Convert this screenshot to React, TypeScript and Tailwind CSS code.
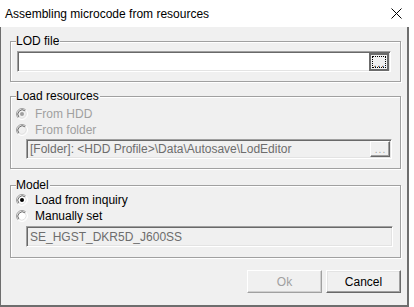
import React from "react";

function Radio({ checked, disabled }: { checked?: boolean; disabled?: boolean }) {
  const a = 3.89;
  return (
    <svg width="12" height="12" viewBox="0 0 12 12" className="shrink-0">
      <circle cx="6" cy="6" r="5" fill={disabled ? "#f0f0f0" : "#ffffff"} />
      <path d={`M${6 - a} ${6 + a} A5.5 5.5 0 0 1 ${6 + a} ${6 - a}`} fill="none" stroke="#a0a0a0" strokeWidth="1" />
      <path d={`M${6 + a} ${6 - a} A5.5 5.5 0 0 1 ${6 - a} ${6 + a}`} fill="none" stroke="#ffffff" strokeWidth="1" />
      <path d={`M${6 - 3.1} ${6 + 3.1} A4.4 4.4 0 0 1 ${6 + 3.1} ${6 - 3.1}`} fill="none" stroke="#696969" strokeWidth="1" />
      <path d={`M${6 + 3.1} ${6 - 3.1} A4.4 4.4 0 0 1 ${6 - 3.1} ${6 + 3.1}`} fill="none" stroke="#e3e3e3" strokeWidth="1" />
      {checked && <circle cx="6" cy="6" r="2" fill={disabled ? "#a0a0a0" : "#000000"} />}
    </svg>
  );
}

function Group({ label, className, children }: { label: string; className: string; children?: React.ReactNode }) {
  return (
    <div className={`relative w-[391px] border border-[#a0a0a0] shadow-[inset_1px_1px_0_#ffffff,1px_1px_0_#ffffff] ${className}`}>
      <span className="absolute left-[5px] top-[-9px] bg-[#f0f0f0] pr-[1px] leading-[16px] text-black">{label}</span>
      {children}
    </div>
  );
}

export default function App() {
  return (
    <div
      className="w-[414px] h-[307px] bg-white overflow-hidden text-[12px] text-black"
      style={{ fontFamily: '"Liberation Sans", Arial, sans-serif' }}
    >
      <div className="w-[409px] h-[27px] flex items-center justify-between pl-[5px] pr-[6px] bg-white">
        <span className="leading-none">Assembling microcode from resources</span>
        <svg width="11" height="11" viewBox="0 0 11 11" className="mr-[1px]">
          <path d="M0.5 0.5 L10.5 10.5 M10.5 0.5 L0.5 10.5" stroke="#000" strokeWidth="1" />
        </svg>
      </div>
      <div className="w-[409px] h-[280px] bg-[#f0f0f0] border-l border-r-2 border-b-2 border-[#6e6e6e] pl-[9px] pt-[14px]">
        <Group label="LOD file" className="h-[41px] pl-[6px] pt-[9px]">
          <div className="w-[374px] h-[21px] flex items-center justify-end bg-white border border-t-[#a0a0a0] border-l-[#a0a0a0] border-r-white border-b-white shadow-[inset_1px_1px_0_#696969,inset_-1px_-1px_0_#e3e3e3] pr-[1px]">
            <div className="w-[20px] h-[18px] border-2 border-[#6b6b6b] bg-[#f0f0f0] p-[1px]">
              <div className="w-full h-full border border-dotted border-black flex items-end justify-center">
                <span className="text-[10px] leading-[6px] tracking-[1px] pl-[1px]">...</span>
              </div>
            </div>
          </div>
        </Group>

        <Group label="Load resources" className="mt-[14px] h-[73px] pl-[5px] pt-[9px]">
          <div className="flex items-center gap-[7px] h-[16px] text-[#a0a0a0]">
            <Radio checked disabled />
            <span>From HDD</span>
          </div>
          <div className="flex items-center gap-[7px] h-[16px] text-[#a0a0a0]">
            <Radio disabled />
            <span>From folder</span>
          </div>
          <div className="ml-[10px] mt-[1px] w-[366px] h-[20px] flex items-center justify-between bg-[#f0f0f0] border border-t-[#a0a0a0] border-l-[#a0a0a0] border-r-white border-b-white shadow-[inset_1px_1px_0_#696969,inset_-1px_-1px_0_#e3e3e3] pl-[3px] pr-[1px]">
            <span className="text-[#6d6d6d] whitespace-nowrap">[Folder]: &lt;HDD Profile&gt;\Data\Autosave\LodEditor</span>
            <div className="w-[20px] h-[16px] bg-[#f0f0f0] border border-t-white border-l-white border-r-[#696969] border-b-[#696969] shadow-[inset_-1px_-1px_0_#a0a0a0] flex items-end justify-center pb-[3px]">
              <span className="text-[10px] leading-[6px] text-[#a0a0a0] tracking-[1px] pl-[1px]">...</span>
            </div>
          </div>
        </Group>

        <Group label="Model" className="mt-[16px] h-[73px] pl-[5px] pt-[6px]">
          <div className="flex items-center gap-[7px] h-[16px]">
            <Radio checked />
            <span>Load from inquiry</span>
          </div>
          <div className="flex items-center gap-[7px] h-[16px]">
            <Radio />
            <span>Manually set</span>
          </div>
          <div className="ml-[10px] mt-[2px] w-[367px] h-[21px] flex items-center bg-[#f0f0f0] border border-t-[#a0a0a0] border-l-[#a0a0a0] border-r-white border-b-white shadow-[inset_1px_1px_0_#696969,inset_-1px_-1px_0_#e3e3e3] pl-[3px]">
            <span className="text-[#6d6d6d]">SE_HGST_DKR5D_J600SS</span>
          </div>
        </Group>

        <div className="w-[391px] mt-[12px] flex justify-end gap-[4px]">
          <div className="w-[75px] h-[23px] flex items-center justify-center bg-[#f0f0f0] border border-t-white border-l-white border-r-[#a0a0a0] border-b-[#a0a0a0] shadow-[inset_-1px_-1px_0_#d0d0d0] text-[#a0a0a0]">
            Ok
          </div>
          <div className="w-[75px] h-[23px] flex items-center justify-center bg-[#f0f0f0] border border-t-white border-l-white border-r-[#696969] border-b-[#696969] shadow-[inset_-1px_-1px_0_#a0a0a0,inset_1px_1px_0_#e3e3e3]">
            Cancel
          </div>
        </div>
      </div>
    </div>
  );
}
